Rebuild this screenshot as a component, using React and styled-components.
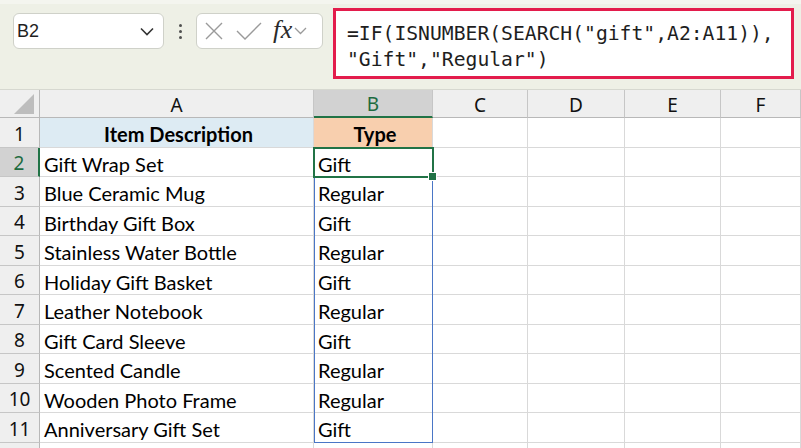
import React from "react";
import styled, { createGlobalStyle } from "styled-components";

const GlobalStyle = createGlobalStyle`
  html, body {
    margin: 0;
    padding: 0;
    background: #ffffff;
    overflow: hidden;
  }
  body {
    font-family: "Lato", "Noto Sans", sans-serif;
  }
`;

const columns = [
  { key: "A", width: 274 },
  { key: "B", width: 119, active: true },
  { key: "C", width: 95 },
  { key: "D", width: 97 },
  { key: "E", width: 96 },
  { key: "F", width: 80 },
];

const rows = [
  ["Gift Wrap Set", "Gift"],
  ["Blue Ceramic Mug", "Regular"],
  ["Birthday Gift Box", "Gift"],
  ["Stainless Water Bottle", "Regular"],
  ["Holiday Gift Basket", "Gift"],
  ["Leather Notebook", "Regular"],
  ["Gift Card Sleeve", "Gift"],
  ["Scented Candle", "Regular"],
  ["Wooden Photo Frame", "Regular"],
  ["Anniversary Gift Set", "Gift"],
];

const ROW_H = 29.5;
const HEAD_H = 28;

function App() {
  return (
    <>
      <GlobalStyle />
      <Page>
        <Toolbar>
          <NameBox>
            <span>B2</span>
            <Chevron width="14" height="9" viewBox="0 0 14 9">
              <path d="M1 1.5 L7 7.5 L13 1.5" fill="none" stroke="#333" strokeWidth="1.6" />
            </Chevron>
          </NameBox>
          <Dots>
            <i />
            <i />
            <i />
          </Dots>
          <FuncBox>
            <svg width="18" height="18" viewBox="0 0 18 18">
              <path d="M1 1 L17 17 M17 1 L1 17" stroke="#9a9a9a" strokeWidth="1.4" fill="none" />
            </svg>
            <svg width="26" height="18" viewBox="0 0 26 18">
              <path d="M1 9 L9 17 L25 1" stroke="#9a9a9a" strokeWidth="1.4" fill="none" />
            </svg>
            <Fx>fx</Fx>
            <svg width="13" height="8" viewBox="0 0 13 8">
              <path d="M1 1 L6.5 6.5 L12 1" stroke="#9a9a9a" strokeWidth="1.3" fill="none" />
            </svg>
          </FuncBox>
          <FormulaBox>
            {'=IF(ISNUMBER(SEARCH("gift",A2:A11)),'}
            <br />
            {'"Gift","Regular")'}
          </FormulaBox>
        </Toolbar>

        <Sheet>
          <Corner>
            <svg width="22" height="22" viewBox="0 0 22 22">
              <path d="M21 1 L21 21 L1 21 Z" fill="#bdbdbd" />
            </svg>
          </Corner>
          {columns.map((c) => (
            <ColHead key={c.key} $active={c.active}>
              {c.key}
            </ColHead>
          ))}

          <RowHead>1</RowHead>
          <Cell $bg="#ddebf3" $bold $center>Item Description</Cell>
          <Cell $bg="#f8cfae" $bold $center>Type</Cell>
          <Cell />
          <Cell />
          <Cell />
          <Cell />

          {rows.map((r, i) => (
            <React.Fragment key={i}>
              <RowHead $active={i === 0}>{i + 2}</RowHead>
              <Cell>{r[0]}</Cell>
              <Cell>{r[1]}</Cell>
              <Cell />
              <Cell />
              <Cell />
              <Cell />
            </React.Fragment>
          ))}

          <RowHead />
          <Cell />
          <Cell />
          <Cell />
          <Cell />
          <Cell />
          <Cell />

          <RangeBox
            style={{
              left: 314,
              top: HEAD_H + ROW_H * 2 - 1,
              width: 119,
              height: ROW_H * 9 + 1,
            }}
          />
          <ActiveCell
            style={{
              left: 313,
              top: HEAD_H + ROW_H - 1,
              width: 121,
              height: ROW_H + 2,
            }}
          >
            <Handle />
          </ActiveCell>
        </Sheet>
      </Page>
    </>
  );
}

const Page = styled.div`
  width: 801px;
  height: 448px;
  overflow: hidden;
`;

const Toolbar = styled.div`
  background: #eef0e6;
  border-bottom: 1px solid #d6d8d0;
  border-top: 4px solid #f4f5ef;
  box-sizing: border-box;
  height: 90px;
  display: flex;
  align-items: flex-start;
  padding: 4px 0 0 13px;
`;

const NameBox = styled.div`
  margin-top: 5px;
  width: 151px;
  height: 36px;
  box-sizing: border-box;
  background: #ffffff;
  border: 1px solid #cfd1c9;
  border-radius: 6px;
  display: flex;
  align-items: center;
  justify-content: space-between;
  padding: 0 9px 0 3px;
  font-family: "Liberation Sans", "Noto Sans", sans-serif;
  font-size: 18px;
  color: #1f1f1f;
`;

const Chevron = styled.svg`
  display: block;
`;

const Dots = styled.div`
  width: 32px;
  height: 36px;
  margin-top: 5px;
  display: flex;
  flex-direction: column;
  align-items: center;
  justify-content: center;
  gap: 3px;
  i {
    width: 3px;
    height: 3px;
    border-radius: 50%;
    background: #505050;
  }
`;

const FuncBox = styled.div`
  margin-top: 5px;
  width: 127px;
  height: 36px;
  box-sizing: border-box;
  background: #ffffff;
  border: 1px solid #cfd1c9;
  border-radius: 6px;
  display: flex;
  align-items: center;
  gap: 13px;
  padding: 0 0 0 8px;
  svg:last-child {
    margin-left: -12px;
  }
`;

const Fx = styled.span`
  font-family: "Liberation Serif", "DejaVu Serif", serif;
  font-style: italic;
  font-size: 26px;
  line-height: 1;
  color: #2a2a2a;
  margin: -3px 0 0 -2px;
  letter-spacing: 0.5px;
`;

const FormulaBox = styled.div`
  margin-left: 10px;
  width: 461px;
  height: 71px;
  box-sizing: border-box;
  background: #ffffff;
  border: 3px solid #e31c4c;
  padding: 10px 0 0 11px;
  font-family: "DejaVu Sans Mono", "Liberation Mono", monospace;
  font-size: 19.7px;
  line-height: 26px;
  color: #1e1e1e;
  white-space: nowrap;
`;

const Sheet = styled.div`
  position: relative;
  display: grid;
  grid-template-columns: 40px ${columns.map((c) => c.width + "px").join(" ")};
  grid-template-rows: ${HEAD_H}px repeat(11, ${ROW_H}px) 20px;
`;

const Corner = styled.div`
  background: #efefef;
  border-right: 1px solid #b8b8b8;
  border-bottom: 1px solid #b8b8b8;
  display: flex;
  align-items: flex-end;
  justify-content: flex-end;
  padding: 0 4px 2px 0;
  box-sizing: border-box;
`;

const ColHead = styled.div`
  box-sizing: border-box;
  background: ${(p) => (p.$active ? "#d2d2d2" : "#efefef")};
  color: ${(p) => (p.$active ? "#1d6b3f" : "#111")};
  border-right: 1px solid #c6c6c6;
  border-bottom: ${(p) => (p.$active ? "2px solid #217346" : "1px solid #b8b8b8")};
  display: flex;
  align-items: center;
  justify-content: center;
  font-family: "Noto Sans", "Liberation Sans", sans-serif;
  font-size: 19px;
  padding-top: 2px;
`;

const RowHead = styled.div`
  box-sizing: border-box;
  background: ${(p) => (p.$active ? "#d2d2d2" : "#efefef")};
  color: ${(p) => (p.$active ? "#1d6b3f" : "#111")};
  border-right: ${(p) => (p.$active ? "2px solid #217346" : "1px solid #b8b8b8")};
  border-bottom: 1px solid #c6c6c6;
  display: flex;
  align-items: center;
  justify-content: center;
  font-family: "Noto Sans", "Liberation Sans", sans-serif;
  font-size: 19px;
  padding-top: 3px;
`;

const Cell = styled.div`
  box-sizing: border-box;
  background: ${(p) => p.$bg || "#ffffff"};
  border-right: 1px solid #d9d9d9;
  border-bottom: 1px solid #d9d9d9;
  display: flex;
  align-items: center;
  justify-content: ${(p) => (p.$center ? "center" : "flex-start")};
  padding: 4px 0 0 4px;
  font-family: "Lato", "Noto Sans", sans-serif;
  font-size: 20px;
  font-weight: ${(p) => (p.$bold ? 700 : 400)};
  color: #000;
  white-space: nowrap;
  overflow: hidden;
`;

const RangeBox = styled.div`
  position: absolute;
  box-sizing: border-box;
  border: 1.5px solid #4a76c6;
  pointer-events: none;
`;

const ActiveCell = styled.div`
  position: absolute;
  box-sizing: border-box;
  border: 2px solid #217346;
  pointer-events: none;
`;

const Handle = styled.div`
  position: absolute;
  right: -5px;
  bottom: -5px;
  width: 7px;
  height: 7px;
  background: #217346;
  border: 1px solid #ffffff;
`;

export default App;
